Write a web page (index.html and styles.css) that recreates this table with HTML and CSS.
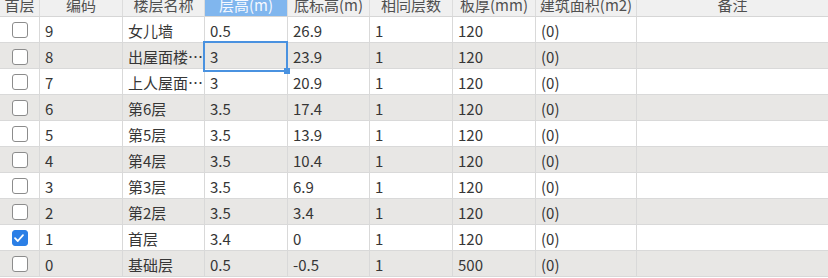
FILE: index.html
```html
<!DOCTYPE html>
<html lang="zh">
<head>
<meta charset="utf-8">
<link rel="stylesheet" href="styles.css">
</head>
<body>
<div class="grid">
  <div class="row head">
    <div class="cell">首层</div>
    <div class="cell">编码</div>
    <div class="cell">楼层名称</div>
    <div class="cell active-col">层高(m)</div>
    <div class="cell">底标高(m)</div>
    <div class="cell">相同层数</div>
    <div class="cell">板厚(mm)</div>
    <div class="cell">建筑面积(m2)</div>
    <div class="cell">备注</div>
  </div>
  <div class="row">
    <div class="cell check"><span class="box"></span></div>
    <div class="cell">9</div><div class="cell">女儿墙</div><div class="cell">0.5</div><div class="cell">26.9</div><div class="cell">1</div><div class="cell">120</div><div class="cell">(0)</div><div class="cell"></div>
  </div>
  <div class="row alt">
    <div class="cell check"><span class="box"></span></div>
    <div class="cell">8</div><div class="cell">出屋面楼梯间</div><div class="cell selected">3</div><div class="cell">23.9</div><div class="cell">1</div><div class="cell">120</div><div class="cell">(0)</div><div class="cell"></div>
  </div>
  <div class="row">
    <div class="cell check"><span class="box"></span></div>
    <div class="cell">7</div><div class="cell">上人屋面楼层</div><div class="cell">3</div><div class="cell">20.9</div><div class="cell">1</div><div class="cell">120</div><div class="cell">(0)</div><div class="cell"></div>
  </div>
  <div class="row alt">
    <div class="cell check"><span class="box"></span></div>
    <div class="cell">6</div><div class="cell">第6层</div><div class="cell">3.5</div><div class="cell">17.4</div><div class="cell">1</div><div class="cell">120</div><div class="cell">(0)</div><div class="cell"></div>
  </div>
  <div class="row">
    <div class="cell check"><span class="box"></span></div>
    <div class="cell">5</div><div class="cell">第5层</div><div class="cell">3.5</div><div class="cell">13.9</div><div class="cell">1</div><div class="cell">120</div><div class="cell">(0)</div><div class="cell"></div>
  </div>
  <div class="row alt">
    <div class="cell check"><span class="box"></span></div>
    <div class="cell">4</div><div class="cell">第4层</div><div class="cell">3.5</div><div class="cell">10.4</div><div class="cell">1</div><div class="cell">120</div><div class="cell">(0)</div><div class="cell"></div>
  </div>
  <div class="row">
    <div class="cell check"><span class="box"></span></div>
    <div class="cell">3</div><div class="cell">第3层</div><div class="cell">3.5</div><div class="cell">6.9</div><div class="cell">1</div><div class="cell">120</div><div class="cell">(0)</div><div class="cell"></div>
  </div>
  <div class="row alt">
    <div class="cell check"><span class="box"></span></div>
    <div class="cell">2</div><div class="cell">第2层</div><div class="cell">3.5</div><div class="cell">3.4</div><div class="cell">1</div><div class="cell">120</div><div class="cell">(0)</div><div class="cell"></div>
  </div>
  <div class="row">
    <div class="cell check"><span class="box checked"><svg viewBox="0 0 16 16" width="16" height="16"><path d="M4 8.2 L6.8 11 L12 5.2" fill="none" stroke="#fff" stroke-width="1.8" stroke-linecap="round" stroke-linejoin="round"/></svg></span></div>
    <div class="cell">1</div><div class="cell">首层</div><div class="cell">3.4</div><div class="cell">0</div><div class="cell">1</div><div class="cell">120</div><div class="cell">(0)</div><div class="cell"></div>
  </div>
  <div class="row alt">
    <div class="cell check"><span class="box"></span></div>
    <div class="cell">0</div><div class="cell">基础层</div><div class="cell">0.5</div><div class="cell">-0.5</div><div class="cell">1</div><div class="cell">500</div><div class="cell">(0)</div><div class="cell"></div>
  </div>
</div>
</body>
</html>
```

FILE: styles.css
```css
html, body {
  margin: 0;
  padding: 0;
  background: #ffffff;
  overflow: hidden;
}

.grid {
  width: 828px;
  font-family: "Noto Sans CJK SC", "Microsoft YaHei", sans-serif;
  font-size: 15px;
  color: #363636;
}

.row {
  display: grid;
  grid-template-columns: 40px 83px 82px 83px 82px 83px 83px 101px 1fr;
  height: 26px;
  box-sizing: border-box;
  border-bottom: 1px solid #d9d9d9;
  background: #ffffff;
}

.row.alt {
  background: #e8e7e5;
}

.cell {
  box-sizing: border-box;
  border-right: 1px solid #d9d9d9;
  padding: 0 0 0 5px;
  line-height: 27px;
  white-space: nowrap;
  overflow: hidden;
  text-overflow: ellipsis;
}

.cell:last-child {
  border-right: none;
}

.row.head {
  height: 17px;
  background: #f0f0f0;
  border-bottom: 1px solid #d6d6d6;
  color: #505050;
}

.row.head .cell {
  text-align: center;
  line-height: 9px;
  padding: 0;
  border-right-color: #dcdcdc;
}

.row.head .cell.active-col {
  background: #80b6ee;
  color: #f6f9ff;
}

.cell.check {
  display: flex;
  align-items: center;
  justify-content: center;
  padding: 0;
}

.box {
  width: 16px;
  height: 16px;
  box-sizing: border-box;
  border: 1.5px solid #8c8c8c;
  border-radius: 3px;
  background: #ffffff;
  display: block;
  margin-top: 1px;
}

.box.checked {
  background: #2b7fe6;
  border-color: #2b7fe6;
  position: relative;
}

.box.checked svg {
  position: absolute;
  left: -1.5px;
  top: -1.5px;
}

.cell.selected {
  position: relative;
  overflow: visible;
}

.cell.selected::after {
  content: "";
  position: absolute;
  left: -2px;
  top: -2px;
  right: -1px;
  bottom: -2px;
  border: 2px solid #4a92e0;
  z-index: 2;
  pointer-events: none;
}

.cell.selected::before {
  content: "";
  position: absolute;
  width: 6px;
  height: 6px;
  right: -3px;
  bottom: -4px;
  background: #4a92e0;
  z-index: 3;
}
```
